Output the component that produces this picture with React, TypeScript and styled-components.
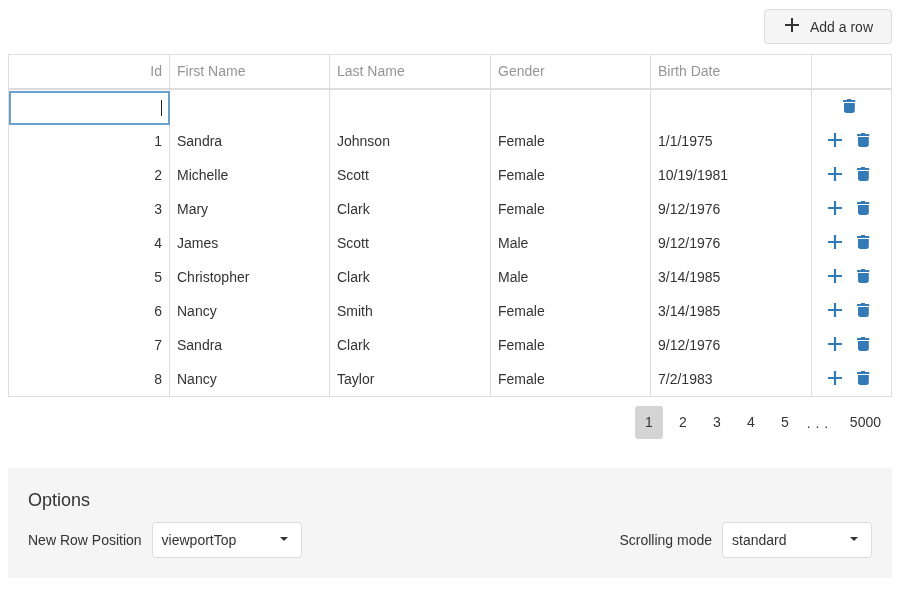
import styled, { createGlobalStyle } from 'styled-components';

interface IEmployee {
  id: number;
  firstName: string;
  lastName: string;
  gender: string;
  birthDate: string;
}

const employees: IEmployee[] = [
  { id: 1, firstName: 'Sandra', lastName: 'Johnson', gender: 'Female', birthDate: '1/1/1975' },
  { id: 2, firstName: 'Michelle', lastName: 'Scott', gender: 'Female', birthDate: '10/19/1981' },
  { id: 3, firstName: 'Mary', lastName: 'Clark', gender: 'Female', birthDate: '9/12/1976' },
  { id: 4, firstName: 'James', lastName: 'Scott', gender: 'Male', birthDate: '9/12/1976' },
  { id: 5, firstName: 'Christopher', lastName: 'Clark', gender: 'Male', birthDate: '3/14/1985' },
  { id: 6, firstName: 'Nancy', lastName: 'Smith', gender: 'Female', birthDate: '3/14/1985' },
  { id: 7, firstName: 'Sandra', lastName: 'Clark', gender: 'Female', birthDate: '9/12/1976' },
  { id: 8, firstName: 'Nancy', lastName: 'Taylor', gender: 'Female', birthDate: '7/2/1983' },
];

const columnWidths = [160, 160, 161, 160, 161, 80];

const GlobalStyle = createGlobalStyle`
  html, body {
    margin: 0;
    padding: 0;
    background: #fff;
    font-family: "Liberation Sans", Arial, sans-serif;
    font-size: 14px;
    color: #333;
  }
`;

const Page = styled.div`
  width: 884px;
  margin: 0 8px;
  padding-top: 9px;
  will-change: transform;
`;

const Toolbar = styled.div`
  display: flex;
  justify-content: flex-end;
  margin-bottom: 10px;
`;

const AddButton = styled.button`
  display: flex;
  align-items: center;
  gap: 11px;
  height: 35px;
  padding: 0 18px 0 20px;
  background: #f5f5f5;
  border: 1px solid #ddd;
  border-radius: 4px;
  color: #333;
  font: inherit;

  svg {
    width: 14px;
    height: 14px;
    margin-top: -3px;
    fill: #333;
  }
`;

const Table = styled.table`
  width: 884px;
  table-layout: fixed;
  border-collapse: separate;
  border-spacing: 0;
  border: 1px solid #ddd;
  box-sizing: border-box;
`;

const HeaderCell = styled.th<{ $right?: boolean }>`
  height: 35px;
  padding: 0 7px 2px;
  box-sizing: border-box;
  border-left: 1px solid #ddd;
  border-bottom: 2px solid #ddd;
  font-weight: 400;
  color: #959595;
  text-align: ${(p) => (p.$right ? 'right' : 'left')};

  &:first-child {
    border-left: 0;
  }
`;

const Cell = styled.td<{ $right?: boolean }>`
  height: 34px;
  padding: 0 7px;
  box-sizing: border-box;
  border-left: 1px solid #ddd;
  text-align: ${(p) => (p.$right ? 'right' : 'left')};
  white-space: nowrap;

  &:first-child {
    border-left: 0;
  }
`;

const EditingCell = styled.td`
  height: 34px;
  padding: 0;
  position: relative;
`;

const EditBox = styled.div`
  position: absolute;
  left: 0;
  right: -1px;
  top: 1px;
  bottom: -1px;
  display: flex;
  justify-content: flex-end;
  align-items: center;
  padding-right: 6px;
  border: 2px solid #6ba0cf;
  box-sizing: border-box;
  background: #fff;
`;

const Caret = styled.span`
  width: 1px;
  height: 16px;
  background: #222;
`;

const Actions = styled.div`
  display: flex;
  justify-content: center;
  align-items: center;
  gap: 10px;
  margin-top: -3px;
  padding-right: 6px;
`;

const ActionIcon = styled.svg`
  width: 18px;
  height: 18px;
  fill: #337ab7;
  display: block;
`;

const Pager = styled.div`
  display: flex;
  justify-content: flex-end;
  align-items: center;
  gap: 6px;
  margin-top: 9px;
  padding-right: 1px;
`;

const PageNumber = styled.div<{ $active?: boolean }>`
  min-width: 8px;
  height: 31px;
  padding: 0 10px 2px;
  display: flex;
  align-items: center;
  justify-content: center;
  border-radius: 3px;
  background: ${(p) => (p.$active ? '#d4d4d4' : 'transparent')};
`;

const PageDots = styled.div`
  width: 29px;
  padding-left: 2px;
  box-sizing: border-box;
  letter-spacing: 4.8px;
  white-space: nowrap;
`;

const OptionsPanel = styled.div`
  margin-top: 29px;
  height: 110px;
  padding: 20px;
  box-sizing: border-box;
  background: #f5f5f5;
`;

const OptionsTitle = styled.div`
  font-size: 18px;
  line-height: 24px;
  margin-bottom: 10px;
`;

const OptionsRow = styled.div`
  display: flex;
  justify-content: space-between;
`;

const Option = styled.div`
  display: flex;
  align-items: center;
  gap: 10px;
`;

const SelectBox = styled.div`
  width: 150px;
  height: 36px;
  box-sizing: border-box;
  display: flex;
  align-items: center;
  justify-content: space-between;
  padding: 0 13px 0 9px;
  background: #fff;
  border: 1px solid #ddd;
  border-radius: 4px;
`;

const Arrow = styled.span`
  width: 0;
  height: 0;
  margin-top: -3px;
  border-left: 4px solid transparent;
  border-right: 4px solid transparent;
  border-top: 4px solid #333;
`;

const PlusIcon = () => (
  <ActionIcon viewBox="0 0 18 18">
    <path d="M7.900 2h2.200v6H16v2h-5.900v6H7.900v-6H2V8h5.900z" />
  </ActionIcon>
);

const TrashIcon = () => (
  <ActionIcon viewBox="0 0 18 18">
    <path d="M7 2h4v1h3.800c.3 0 .5.200.5.500V5H3V3.500c0-.3.200-.5.500-.5H7z" />
    <path d="M4 6h10.800v7.500c0 1.600-.9 2.500-2.500 2.500H6.500C4.900 16 4 15.100 4 13.500z" />
  </ActionIcon>
);

const App = () => {
  return (
    <Page>
      <GlobalStyle />
      <Toolbar>
        <AddButton>
          <svg viewBox="0 0 14 14">
            <path d="M6 0h2v6h6v2H8v6H6V8H0V6h6z" />
          </svg>
          Add a row
        </AddButton>
      </Toolbar>

      <Table>
        <colgroup>
          {columnWidths.map((width, idx) => (
            <col key={idx} width={width} />
          ))}
        </colgroup>
        <thead>
          <tr>
            <HeaderCell $right>Id</HeaderCell>
            <HeaderCell>First Name</HeaderCell>
            <HeaderCell>Last Name</HeaderCell>
            <HeaderCell>Gender</HeaderCell>
            <HeaderCell>Birth Date</HeaderCell>
            <HeaderCell />
          </tr>
        </thead>
        <tbody>
          <tr>
            <EditingCell>
              <EditBox>
                <Caret />
              </EditBox>
            </EditingCell>
            <Cell />
            <Cell />
            <Cell />
            <Cell />
            <Cell>
              <Actions>
                <TrashIcon />
              </Actions>
            </Cell>
          </tr>
          {employees.map((employee) => (
            <tr key={employee.id}>
              <Cell $right>{employee.id}</Cell>
              <Cell>{employee.firstName}</Cell>
              <Cell>{employee.lastName}</Cell>
              <Cell>{employee.gender}</Cell>
              <Cell>{employee.birthDate}</Cell>
              <Cell>
                <Actions>
                  <PlusIcon />
                  <TrashIcon />
                </Actions>
              </Cell>
            </tr>
          ))}
        </tbody>
      </Table>

      <Pager>
        <PageNumber $active>1</PageNumber>
        <PageNumber>2</PageNumber>
        <PageNumber>3</PageNumber>
        <PageNumber>4</PageNumber>
        <PageNumber>5</PageNumber>
        <PageDots>...</PageDots>
        <PageNumber>5000</PageNumber>
      </Pager>

      <OptionsPanel>
        <OptionsTitle>Options</OptionsTitle>
        <OptionsRow>
          <Option>
            New Row Position
            <SelectBox>
              viewportTop
              <Arrow />
            </SelectBox>
          </Option>
          <Option>
            Scrolling mode
            <SelectBox>
              standard
              <Arrow />
            </SelectBox>
          </Option>
        </OptionsRow>
      </OptionsPanel>
    </Page>
  );
};

export default App;
